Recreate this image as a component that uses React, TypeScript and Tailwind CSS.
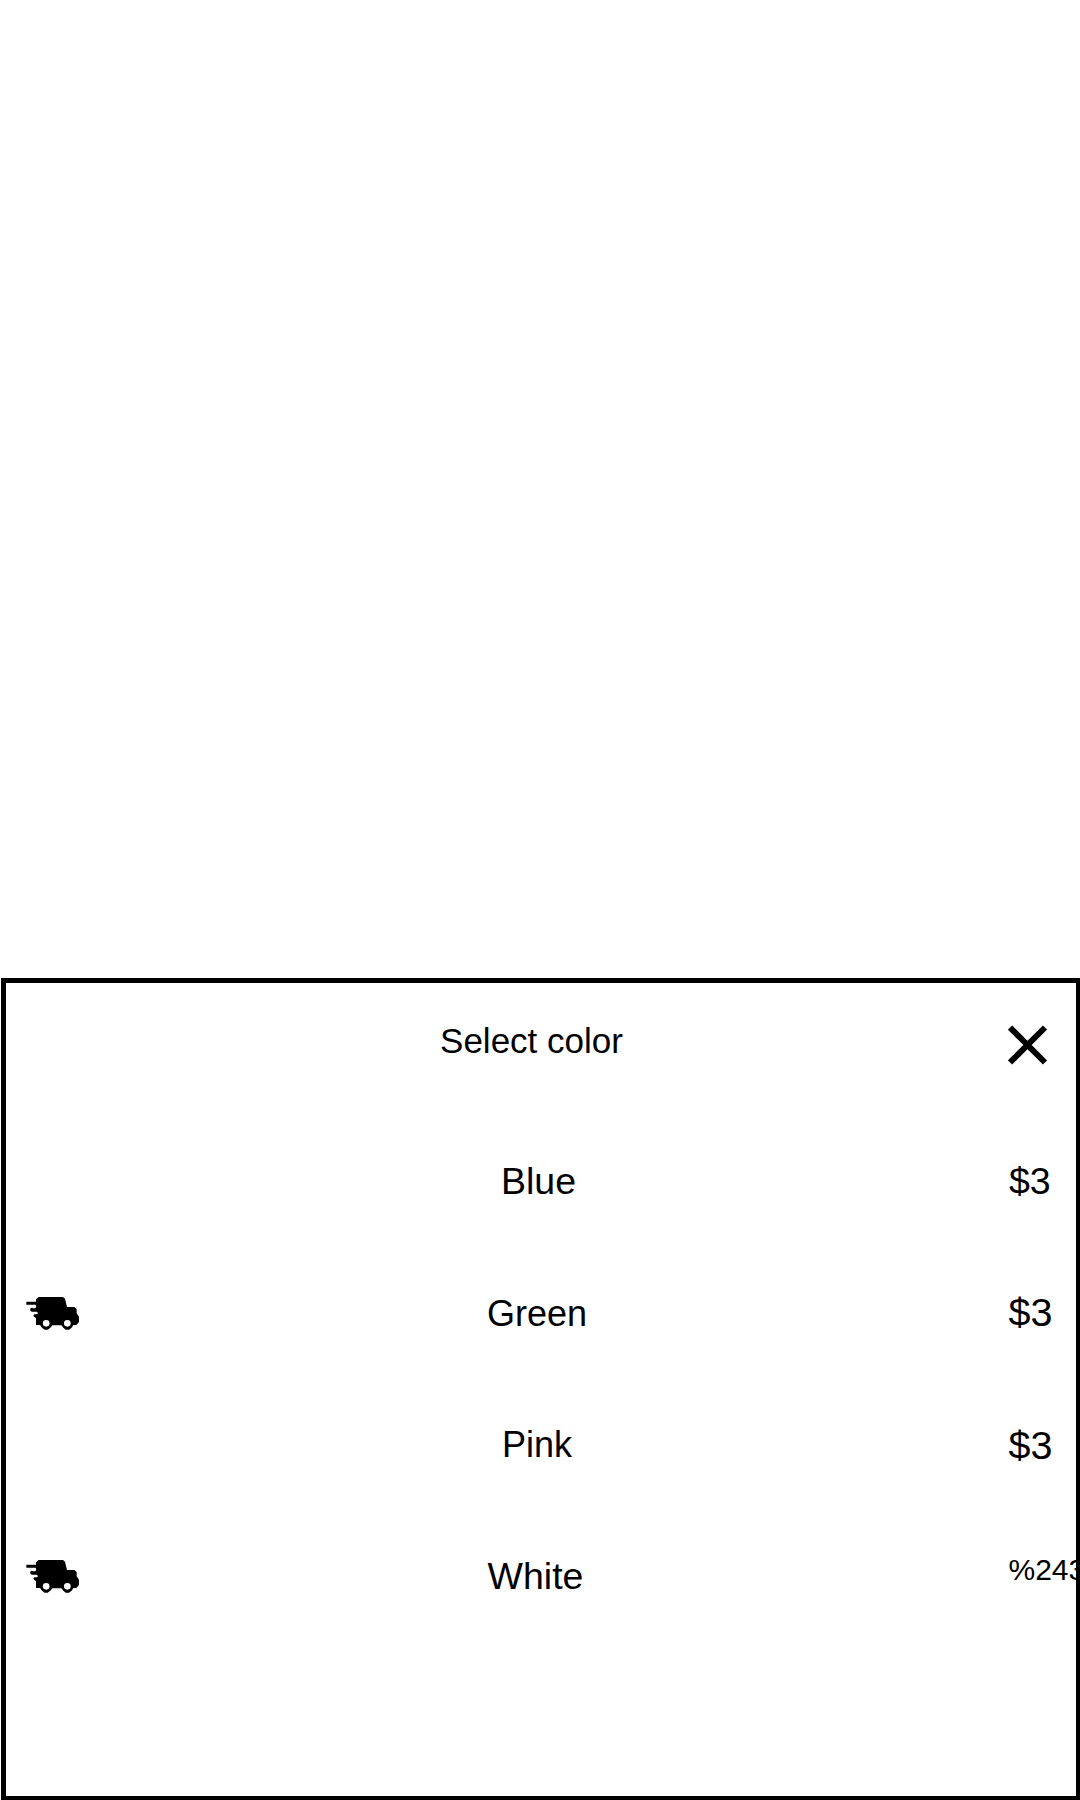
function Truck() {
  return (
    <svg className="block h-[33px] w-[54px]" viewBox="78 50 162 99">
      <path
        d="M116 50H189L195 55L198 68L201 80H223L230 86V99L237 109V125L229 134H220L215 142L207 148H197L190 142L184 135H157L151 142L143 148H134L126 142L120 134H108V113L103 110L100 106L103 102H111L115 99L110 94H95L90 89L92 84L96 82L99 84H106L109 79L107 73H79V64H108V57Z"
        fill="black"
      />
      <path d="M115 71L109 82H119L112 104H122V71Z" fill="black" />
      <circle cx="138.5" cy="129" r="10" fill="white" />
      <circle cx="202" cy="129" r="10" fill="white" />
    </svg>
  );
}

function Cross() {
  return (
    <svg className="block h-[40px] w-[40px]" viewBox="0 0 40 40">
      <path d="M2 2.5L37 37.5M37 2.5L2 37.5" stroke="black" strokeWidth="6" />
    </svg>
  );
}

const rows = [
  { name: "Blue", price: "$3", truck: "", row: "h-[132px]", label: "text-[37.5px] pl-[3px]", cost: "text-[37.5px]" },
  { name: "Green", price: "$3", truck: "mt-[4px]", row: "h-[131px]", label: "text-[36px] mt-px", cost: "text-[39.5px] -mt-px -ml-[0.5px]" },
  { name: "Pink", price: "$3", truck: "", row: "h-[132px]", label: "text-[36px] mt-px", cost: "text-[39.5px] mt-px -ml-[0.5px]" },
  { name: "White", price: "%243", truck: "mt-[4px]", row: "h-[132px]", label: "text-[37.5px] -ml-[3px]", cost: "text-[30px] -mt-[6px] -ml-[0.5px]" },
];

export default function App() {
  return (
    <main
      className="flex h-[1800px] w-[1080px] flex-col justify-end overflow-hidden bg-white pl-px leading-[40px] text-black"
      style={{ fontFamily: '"Liberation Sans", Arial, sans-serif' }}
    >
      <section className="h-[822px] w-full overflow-hidden border-4 border-l-[5px] border-t-[5px] border-black pt-[38px]">
        <header className="grid h-[140px] grid-cols-[80px_1fr_74px] items-start">
          <span />
          <h1 className="pr-[25px] text-center text-[35px]">Select color</h1>
          <button aria-label="Close" className="mt-[4px] ml-[6px]">
            <Cross />
          </button>
        </header>
        <ul>
          {rows.map((r) => (
            <li key={r.name} className={`grid grid-cols-[80px_1fr_67px] items-start ${r.row}`}>
              <span className={`pl-[20px] ${r.truck}`}>{r.truck && <Truck />}</span>
              <span className={`pr-[21px] text-center ${r.label}`}>{r.name}</span>
              <span className={`whitespace-nowrap ${r.cost}`}>{r.price}</span>
            </li>
          ))}
        </ul>
      </section>
    </main>
  );
}
